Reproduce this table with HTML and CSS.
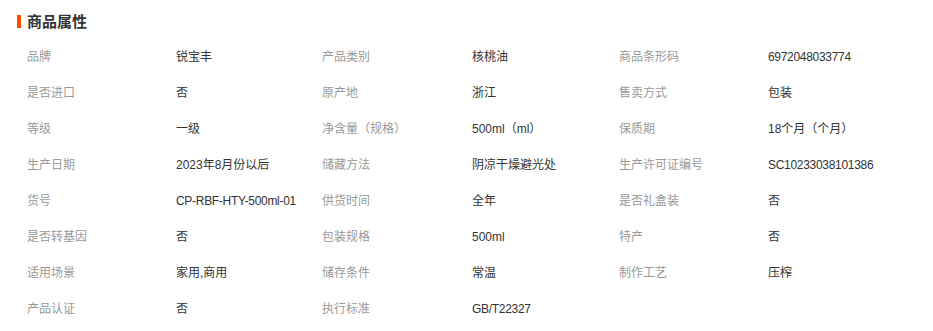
FILE: index.html
```html
<!DOCTYPE html>
<html lang="zh-CN">
<head>
<meta charset="utf-8">
<title>商品属性</title>
<link rel="stylesheet" href="styles.css">
</head>
<body>
<section class="attrs">
  <h2 class="attrs-title">商品属性</h2>
  <div class="attrs-grid">
    <span class="k">品牌</span><span class="v">锐宝丰</span>
    <span class="k">产品类别</span><span class="v">核桃油</span>
    <span class="k">商品条形码</span><span class="v lat">6972048033774</span>

    <span class="k">是否进口</span><span class="v">否</span>
    <span class="k">原产地</span><span class="v">浙江</span>
    <span class="k">售卖方式</span><span class="v">包装</span>

    <span class="k">等级</span><span class="v">一级</span>
    <span class="k">净含量（规格）</span><span class="v">500ml（ml）</span>
    <span class="k">保质期</span><span class="v">18个月（个月）</span>

    <span class="k">生产日期</span><span class="v">2023年8月份以后</span>
    <span class="k">储藏方法</span><span class="v">阴凉干燥避光处</span>
    <span class="k">生产许可证编号</span><span class="v lat">SC10233038101386</span>

    <span class="k">货号</span><span class="v lat">CP-RBF-HTY-500ml-01</span>
    <span class="k">供货时间</span><span class="v">全年</span>
    <span class="k">是否礼盒装</span><span class="v">否</span>

    <span class="k">是否转基因</span><span class="v">否</span>
    <span class="k">包装规格</span><span class="v">500ml</span>
    <span class="k">特产</span><span class="v">否</span>

    <span class="k">适用场景</span><span class="v">家用,商用</span>
    <span class="k">储存条件</span><span class="v">常温</span>
    <span class="k">制作工艺</span><span class="v">压榨</span>

    <span class="k">产品认证</span><span class="v">否</span>
    <span class="k">执行标准</span><span class="v lat">GB/T22327</span>
  </div>
</section>
</body>
</html>
```

FILE: styles.css
```css
html, body {
  margin: 0;
  padding: 0;
  background: #fff;
}
body {
  font-family: "Liberation Sans", "Noto Sans CJK SC", sans-serif;
  font-size: 12px;
  color: #333;
}
.attrs {
  width: 933px;
}
.attrs-title {
  margin: 0 0 7px;
  height: 32px;
  box-sizing: border-box;
  padding: 11px 0 0 17px;
  display: flex;
  align-items: center;
  font-size: 15px;
  font-weight: bold;
  color: #333;
  line-height: 20px;
}
.attrs-title::before {
  content: "";
  display: block;
  width: 4px;
  height: 13px;
  background: #ff4a00;
  margin-right: 6px;
}
.attrs-grid {
  display: grid;
  grid-template-columns: 149px 146px 150px 147px 149px auto;
  padding-left: 27px;
  grid-auto-rows: 36px;
  line-height: 36px;
}
.k {
  color: #999;
  white-space: nowrap;
}
.v {
  color: #333;
  white-space: nowrap;
}
.lat {
  letter-spacing: -0.3px;
}
```
